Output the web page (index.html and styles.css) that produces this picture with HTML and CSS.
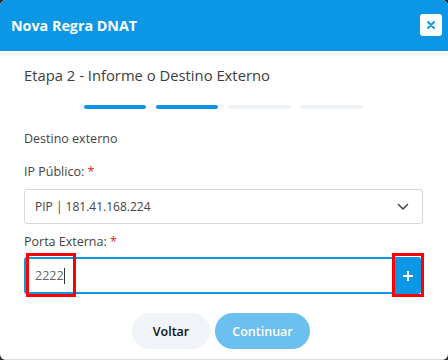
FILE: index.html
```html
<!DOCTYPE html>
<html lang="pt-BR">
<head>
  <meta charset="UTF-8">
  <title>Nova Regra DNAT</title>
  <link rel="stylesheet" href="styles.css">
</head>
<body>
  <div class="modal">
    <div class="modal-header">
      <h1 class="modal-title">Nova Regra DNAT</h1>
      <button class="close-btn" type="button">
        <svg width="10" height="10" viewBox="0 0 10 10">
          <path d="M2 2 L8 8 M8 2 L2 8" stroke="#0b96e6" stroke-width="1.8" stroke-linecap="round"/>
        </svg>
      </button>
    </div>
    <div class="modal-body">
      <h2 class="step-title">Etapa 2 - Informe o Destino Externo</h2>
      <div class="steps">
        <span class="step done"></span>
        <span class="step done"></span>
        <span class="step"></span>
        <span class="step"></span>
      </div>
      <p class="section">Destino externo</p>

      <label class="field-label">IP Público: <span class="req">*</span></label>
      <div class="select">
        <span>PIP | 181.41.168.224</span>
        <svg width="12" height="8" viewBox="0 0 12 8">
          <path d="M1.5 1.5 L6 6 L10.5 1.5" fill="none" stroke="#444" stroke-width="1.5" stroke-linecap="round" stroke-linejoin="round"/>
        </svg>
      </div>

      <label class="field-label">Porta Externa: <span class="req">*</span></label>
      <div class="input-group">
        <div class="input"><span>2222</span><span class="caret"></span></div>
        <button class="add-btn" type="button">
          <svg width="12" height="12" viewBox="0 0 12 12">
            <path d="M6 1 V11 M1 6 H11" stroke="#fff" stroke-width="2"/>
          </svg>
        </button>
        <div class="mark mark-input"></div>
        <div class="mark mark-add"></div>
      </div>

      <div class="actions">
        <button class="btn btn-back" type="button">Voltar</button>
        <button class="btn btn-next" type="button">Continuar</button>
      </div>
    </div>
  </div>
</body>
</html>
```

FILE: styles.css
```css
* {
  margin: 0;
  padding: 0;
  box-sizing: border-box;
}
body {
  background: #2b2b2b;
  font-family: "Open Sans", "Noto Sans", sans-serif;
}
.modal {
  width: 448px;
  height: 360px;
  background: #fff;
  border-radius: 6px;
  overflow: hidden;
  border-bottom: 1px solid #d9dde3;
}
.modal-header {
  height: 51px;
  background: #0b96e6;
  display: flex;
  align-items: center;
  justify-content: space-between;
  padding: 0 6px 0 11px;
}
.modal-title {
  color: #fff;
  font-size: 14.3px;
  font-weight: 700;
}
.close-btn {
  width: 22px;
  height: 22px;
  background: #fff;
  border: 0;
  border-radius: 3px;
  display: flex;
  align-items: center;
  justify-content: center;
  margin-bottom: 2px;
}
.modal-body {
  padding: 14px 25px 0 24px;
}
.step-title {
  font-size: 14.8px;
  font-weight: 400;
  color: #3d3d3d;
  line-height: 20px;
}
.steps {
  display: flex;
  justify-content: center;
  gap: 10px;
  margin-top: 20px;
  padding-right: 2px;
}
.step {
  width: 62px;
  height: 4px;
  border-radius: 2px;
  background: #eef2f6;
}
.step.done {
  background: #0b96e6;
}
.section {
  font-size: 12.5px;
  color: #444;
  line-height: 18px;
  margin-top: 21px;
}
.field-label {
  display: block;
  font-size: 12.5px;
  color: #444;
  line-height: 18px;
  margin-top: 15px;
}
.req {
  color: #e0262b;
}
.select {
  height: 35px;
  margin-top: 8px;
  border: 1px solid #d3d8df;
  border-radius: 3px;
  display: flex;
  align-items: center;
  justify-content: space-between;
  padding: 0 13px 0 10px;
  font-size: 12px;
  color: #444;
}
.select + .field-label {
  margin-top: 9px;
}
.input-group {
  position: relative;
  display: flex;
  height: 37px;
  margin-top: 6px;
  margin-right: 2px;
}
.input {
  flex: 1;
  border: 2px solid #0b96e6;
  border-right: 0;
  border-radius: 3px 0 0 3px;
  display: flex;
  align-items: center;
  padding-left: 9px;
  font-size: 12.5px;
  color: #666;
}
.caret {
  width: 1px;
  height: 16px;
  background: #333;
}
.add-btn {
  width: 27px;
  background: #0b96e6;
  border: 0;
  border-radius: 0 3px 3px 0;
  display: flex;
  align-items: center;
  justify-content: center;
}
.mark {
  position: absolute;
  top: -4px;
  height: 44px;
  border: 3px solid #f00;
}
.mark-input {
  left: 2px;
  width: 50px;
}
.mark-add {
  right: -3px;
  width: 32px;
}
.actions {
  display: flex;
  justify-content: center;
  gap: 5px;
  margin-top: 19px;
  padding-right: 5px;
}
.btn {
  height: 36px;
  border: 0;
  border-radius: 18px;
  font-family: "Open Sans", "Noto Sans", sans-serif;
  font-size: 12.5px;
  font-weight: 600;
}
.btn-back {
  width: 78px;
  background: #f0f4f8;
  color: #111;
}
.btn-next {
  width: 95px;
  background: #6cc0f0;
  color: #fff;
}
```
